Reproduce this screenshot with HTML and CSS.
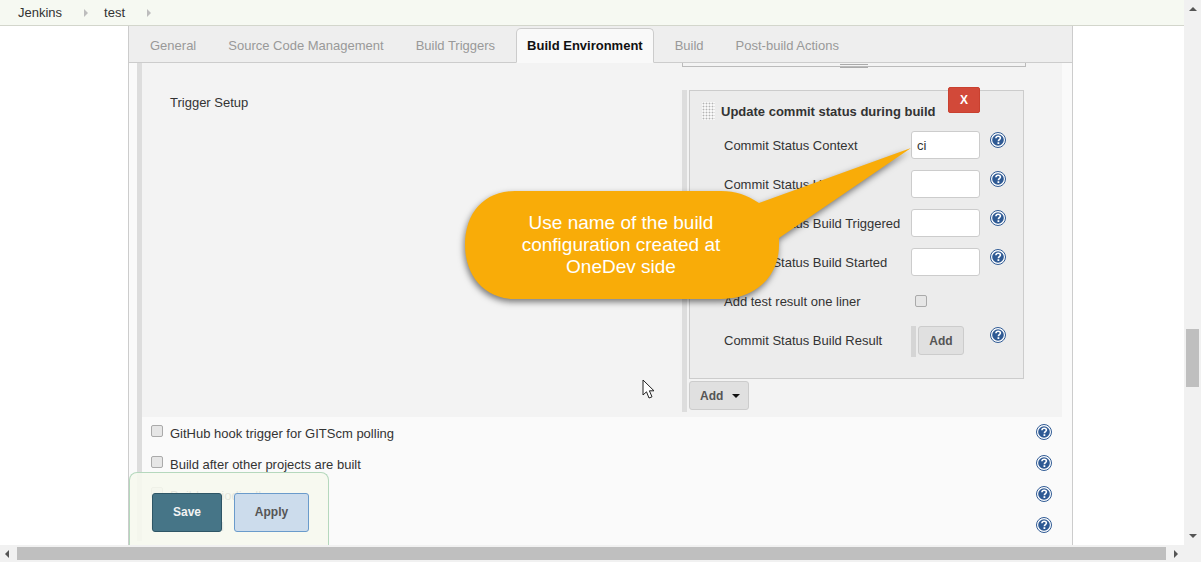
FILE: index.html
```html
<!DOCTYPE html>
<html>
<head>
<meta charset="utf-8">
<title>test Config [Jenkins]</title>
<link rel="stylesheet" href="styles.css">
</head>
<body>
<div class="window">
  <div class="viewport">
    <div class="main">
      <div class="breadcrumbs">
        <span class="crumb">Jenkins</span><i class="crumb-arrow"></i>
        <span class="crumb">test</span><i class="crumb-arrow"></i>
      </div>
      <div class="page">
        <div class="config">
          <div class="tabbar">
            <span class="tab">General</span>
            <span class="tab">Source Code Management</span>
            <span class="tab">Build Triggers</span>
            <span class="tab active">Build Environment</span>
            <span class="tab">Build</span>
            <span class="tab">Post-build Actions</span>
          </div>
          <div class="form">
            <div class="section">
              <div class="section-in">
                <div class="prev-wrap"><div class="prev-box"><i class="grip"></i></div></div>
                <div class="setup">
                  <div class="setup-label">Trigger Setup</div>
                  <div class="setup-body">
                    <div class="chunk">
                      <button class="del">X</button>
                      <div class="chunk-title"><i class="handle"></i><b>Update commit status during build</b></div>
                      <div class="field"><label>Commit Status Context</label><input class="txt" value="ci"><i class="help"><svg viewBox="0 0 16 16"><use href="#q"/></svg></i></div>
                      <div class="field"><label>Commit Status URL</label><input class="txt"><i class="help"><svg viewBox="0 0 16 16"><use href="#q"/></svg></i></div>
                      <div class="field"><label>Commit Status Build Triggered</label><input class="txt"><i class="help"><svg viewBox="0 0 16 16"><use href="#q"/></svg></i></div>
                      <div class="field"><label>Commit Status Build Started</label><input class="txt"><i class="help"><svg viewBox="0 0 16 16"><use href="#q"/></svg></i></div>
                      <div class="field"><label>Add test result one liner</label><span class="check-cell"><i class="check"></i></span></div>
                      <div class="field"><label>Commit Status Build Result</label><span class="add-cell"><button class="btn small">Add</button></span><i class="help"><svg viewBox="0 0 16 16"><use href="#q"/></svg></i></div>
                    </div>
                    <button class="btn drop">Add <i class="caret"></i></button>
                  </div>
                </div>
              </div>
            </div>
            <div class="rows">
              <div class="row"><i class="check"></i><span>GitHub hook trigger for GITScm polling</span><i class="help"><svg viewBox="0 0 16 16"><use href="#q"/></svg></i></div>
              <div class="row"><i class="check"></i><span>Build after other projects are built</span><i class="help"><svg viewBox="0 0 16 16"><use href="#q"/></svg></i></div>
              <div class="row"><i class="check"></i><span>Build periodically</span><i class="help"><svg viewBox="0 0 16 16"><use href="#q"/></svg></i></div>
              <div class="row"><i class="check"></i><span>Poll SCM</span><i class="help"><svg viewBox="0 0 16 16"><use href="#q"/></svg></i></div>
            </div>
          </div>
        </div>
        <div class="bottom-sticker">
          <button class="save">Save</button>
          <button class="apply">Apply</button>
        </div>
        <div class="callout">
          <svg class="callout-shape" width="470" height="130" viewBox="0 0 470 130">
            <path d="M56 6H262C277 6 288 10 300 18L452 -37L320 53V60C320 93 295 114 262 114H56C25 114 6 90 6 60C6 28 25 6 56 6Z" fill="#f9ac08"/>
          </svg>
          <div class="callout-text">Use name of the build configuration created at OneDev side</div>
        </div>
        <svg class="cursor" width="14" height="21" viewBox="0 0 14 21"><path d="M1 1V16L4.5 12.8L7 19L10 17.8L7.4 11.8H12Z" fill="#fff" stroke="#222" stroke-width="1"/></svg>
      </div>
    </div>
    <div class="vscroll"><i class="vup"></i><i class="vthumb"></i><i class="vdown"></i></div>
  </div>
  <div class="hscroll"><i class="hleft"></i><i class="hthumb"></i><i class="hright"></i></div>
</div>
<svg class="defs" width="0" height="0">
  <symbol id="q" viewBox="0 0 16 16">
    <circle cx="8" cy="8" r="7.5" fill="#fff" stroke="#2f5a94" stroke-width="1"/>
    <circle cx="8" cy="8" r="5.8" fill="#2f5a94"/>
    <path d="M5.9 6.3C6 4.9 7 4.2 8.2 4.2C9.5 4.2 10.4 5 10.4 6.1C10.4 7.6 8.4 7.7 8.4 9.2" fill="none" stroke="#fff" stroke-width="1.6"/>
    <rect x="7.5" y="10.2" width="1.8" height="1.8" fill="#fff"/>
  </symbol>
</svg>
</body>
</html>
```

FILE: styles.css
```css
html, body {
  margin: 0;
  height: 100%;
  overflow: hidden;
}
body {
  background: #fff;
  color: #333;
  font-family: "Liberation Sans", Arial, sans-serif;
  font-size: 13px;
}
i {
  display: block;
}
button {
  font-family: inherit;
  cursor: pointer;
}
.defs {
  position: absolute;
}
.window {
  display: flex;
  flex-direction: column;
  height: 562px;
  width: 1201px;
}
.viewport {
  display: flex;
  flex: 1;
  min-height: 0;
}
.main {
  display: flex;
  flex-direction: column;
  flex: 1;
  min-width: 0;
}

/* breadcrumbs */
.breadcrumbs {
  display: flex;
  align-items: center;
  height: 25px;
  padding-left: 18px;
  background: #f6f9f2;
  border-bottom: 1px solid #d3d6cc;
  flex: none;
}
.crumb {
  color: #333;
}
.crumb-arrow {
  width: 0;
  height: 0;
  margin: 0 16px 0 22px;
  border-left: 4px solid #bdbdbd;
  border-top: 4px solid transparent;
  border-bottom: 4px solid transparent;
}

.page {
  position: relative;
  flex: 1;
  min-height: 0;
  overflow: hidden;
  padding-left: 128px;
}
.config {
  width: 943px;
  height: 100%;
  border-left: 1px solid #ccc;
  border-right: 1px solid #ccc;
  background: #fafafa;
}

/* tabs */
.tabbar {
  display: flex;
  align-items: flex-end;
  height: 36px;
  padding-left: 10px;
  background: #eee;
  border-bottom: 1px solid #ccc;
}
.tab {
  padding: 0 11px;
  margin-right: 10px;
  height: 33px;
  line-height: 33px;
  color: #999;
  white-space: nowrap;
}
.tab.active {
  height: 33px;
  margin-bottom: -1px;
  color: #111;
  font-weight: bold;
  background: #f9f9f9;
  border: 1px solid #ccc;
  border-bottom: 1px solid #f9f9f9;
  border-radius: 5px 5px 0 0;
  padding: 0 10px;
}

/* form */
.form {
  margin-left: 8px;
  border-left: 5px solid #ddd;
  width: 920px;
}
.section-in {
  height: 354px;
  background: #f3f3f3;
}
.prev-wrap {
  height: 5px;
  padding-left: 540px;
}
.prev-box {
  width: 342px;
  height: 3px;
  border: 1px solid #bbb;
  border-top: 0;
  display: flex;
  justify-content: center;
}
.grip {
  width: 28px;
  height: 2px;
  margin-top: 1px;
  border-top: 1px solid #aaa;
  border-bottom: 1px solid #aaa;
}
.setup {
  display: flex;
  padding-top: 22px;
}
.setup-label {
  width: 512px;
  padding: 5px 0 0 28px;
}
.setup-body {
  border-left: 5px solid #ddd;
  padding-left: 2px;
  height: 322px;
}
.chunk {
  position: relative;
  box-sizing: border-box;
  width: 335px;
  height: 289px;
  background: #ececec;
  border: 1px solid #ccc;
}
.del {
  position: absolute;
  left: 258px;
  top: -4px;
  width: 32px;
  height: 26px;
  padding: 0;
  background: #d24939;
  color: #fff;
  font-size: 12px;
  font-weight: bold;
  border: 1px solid #c9402f;
  border-radius: 2px;
}
.chunk-title {
  display: flex;
  align-items: center;
  height: 18px;
  margin: 11px 0 11px 12px;
  color: #333;
}
.handle {
  width: 13px;
  height: 18px;
  margin-right: 6px;
  background: radial-gradient(circle, #b4b4b4 0.8px, transparent 1.1px) 0 0 / 3px 3px, #f8f8f8;
}
.field {
  display: flex;
  align-items: center;
  height: 28px;
  margin-bottom: 11px;
  padding-left: 34px;
  position: relative;
}
.field label {
  width: 187px;
  white-space: nowrap;
  flex: none;
  margin-top: 1px;
}
.txt {
  box-sizing: border-box;
  width: 69px;
  height: 28px;
  padding: 0 5px;
  font: 13px "Liberation Sans", Arial, sans-serif;
  color: #333;
  background: #fff;
  border: 1px solid #ccc;
  border-radius: 3px;
  outline: 0;
}
.field .help {
  margin: -10px 0 0 10px;
}
.help {
  width: 16px;
  height: 16px;
  flex: none;
}
.help svg {
  display: block;
  width: 16px;
  height: 16px;
}
.check {
  box-sizing: border-box;
  width: 12px;
  height: 12px;
  background: #e6e6e6;
  border: 1px solid #aaa;
  border-radius: 2px;
  flex: none;
}
.check-cell {
  padding: 0 0 1px 4px;
}
.add-cell {
  display: flex;
  box-sizing: border-box;
  width: 69px;
  height: 31px;
  border-left: 5px solid #d5d5d5;
  padding-left: 2px;
  margin-top: 3px;
}
.btn {
  box-sizing: border-box;
  padding: 0;
  height: 29px;
  background: #e0e0e0;
  border: 1px solid #ccc;
  border-radius: 3px;
  color: #555;
  font-size: 12px;
  font-weight: bold;
}
.small {
  width: 46px;
}
.drop {
  display: flex;
  align-items: center;
  width: 60px;
  margin-top: 2px;
  padding-left: 10px;
}
.caret {
  width: 0;
  height: 0;
  margin-left: 9px;
  border-top: 4px solid #111;
  border-left: 4px solid transparent;
  border-right: 4px solid transparent;
}

/* checkbox rows */
.row {
  display: flex;
  align-items: center;
  height: 31px;
  padding-left: 9px;
}
.row .check {
  margin: -3px 7px 0 0;
}
.row span {
  flex: 1;
  margin-top: 2px;
}
.row .help {
  margin: -2px 10px 0 0;
}

/* sticky save bar */
.bottom-sticker {
  position: absolute;
  left: 129px;
  bottom: 0;
  display: flex;
  gap: 12px;
  box-sizing: border-box;
  width: 200px;
  height: 73px;
  padding: 20px 0 0 22px;
  background: rgba(246, 248, 238, .9);
  border: 1px solid #b5d8bd;
  border-bottom: 0;
  border-radius: 8px 8px 0 0;
}
.save, .apply {
  box-sizing: border-box;
  height: 39px;
  padding: 0 0 2px;
  font-size: 12px;
  font-weight: bold;
  border-radius: 3px;
}
.save {
  width: 70px;
  background: #467587;
  color: #f3f3f3;
  border: 1px solid #2e5666;
}
.apply {
  width: 75px;
  background: #ccdcec;
  color: #555;
  border: 1px solid #6a9bcb;
}

/* annotation drawn over the page */
.callout {
  position: absolute;
  left: 459px;
  top: 159px;
  width: 320px;
  height: 114px;
}
.callout-shape {
  position: absolute;
  left: 0;
  top: 0;
  overflow: visible;
  filter: drop-shadow(-1px 3px 3px rgba(0, 0, 0, .5));
}
.callout-text {
  position: relative;
  box-sizing: border-box;
  width: 240px;
  margin: 26.6px 0 0 42px;
  font-size: 19px;
  line-height: 22.3px;
  color: #fff;
  text-align: center;
}
.cursor {
  position: absolute;
  left: 642px;
  top: 353px;
}

/* scrollbars */
.vscroll {
  position: relative;
  width: 17px;
  background: #f1f1f1;
  flex: none;
}
.vup {
  position: absolute;
  left: 5px;
  top: 7px;
  width: 0;
  height: 0;
  border-bottom: 4px solid #555;
  border-left: 4px solid transparent;
  border-right: 4px solid transparent;
}
.vthumb {
  position: absolute;
  left: 2px;
  top: 329px;
  width: 13px;
  height: 58px;
  background: #bfbfbf;
}
.vdown {
  position: absolute;
  left: 5px;
  bottom: 7px;
  width: 0;
  height: 0;
  border-top: 4px solid #555;
  border-left: 4px solid transparent;
  border-right: 4px solid transparent;
}
.hscroll {
  display: flex;
  align-items: center;
  height: 17px;
  background: #f1f1f1;
  flex: none;
}
.hleft {
  width: 0;
  height: 0;
  margin: 0 8px 0 5px;
  border-right: 4px solid #555;
  border-top: 4px solid transparent;
  border-bottom: 4px solid transparent;
}
.hthumb {
  width: 1149px;
  height: 13px;
  background: #bfbfbf;
}
.hright {
  width: 0;
  height: 0;
  margin-left: 8px;
  border-left: 4px solid #555;
  border-top: 4px solid transparent;
  border-bottom: 4px solid transparent;
}
```
